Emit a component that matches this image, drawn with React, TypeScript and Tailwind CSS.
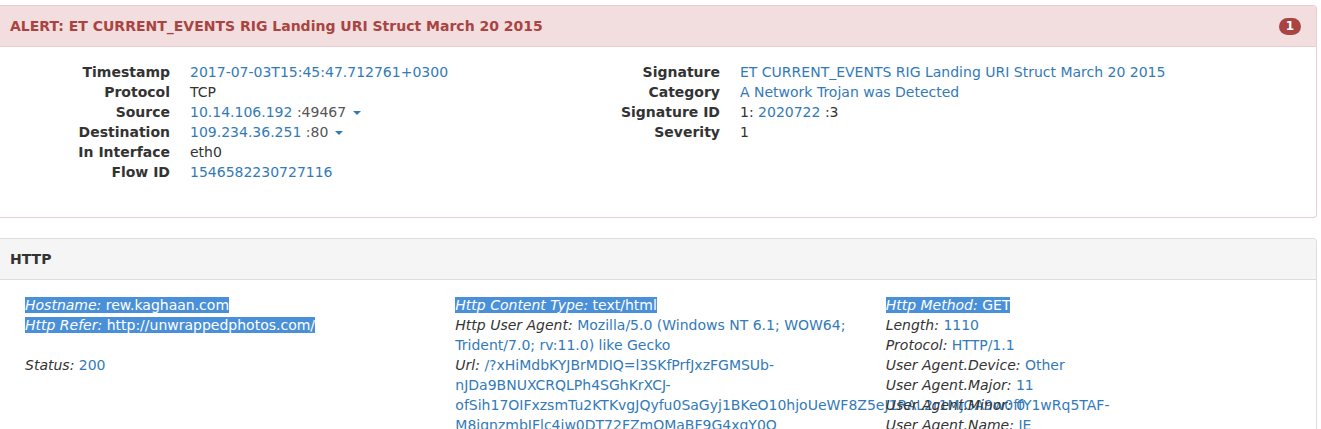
import React from 'react';

const Caret = () => (
  <span className="inline-block w-0 h-0 ml-[2px] align-middle border-t-[4px] border-x-[4px] border-t-[#337ab7] border-x-transparent" />
);

const alertRows: { label: string; value: React.ReactNode }[] = [
  { label: 'Timestamp', value: <span className="text-[#337ab7]">2017-07-03T15:45:47.712761+0300</span> },
  { label: 'Protocol', value: 'TCP' },
  {
    label: 'Source',
    value: (
      <>
        <span className="text-[#337ab7]">10.14.106.192</span> <span className="text-[#555]">:49467</span> <Caret />
      </>
    ),
  },
  {
    label: 'Destination',
    value: (
      <>
        <span className="text-[#337ab7]">109.234.36.251</span> <span className="text-[#555]">:80</span> <Caret />
      </>
    ),
  },
  { label: 'In Interface', value: 'eth0' },
  { label: 'Flow ID', value: <span className="text-[#337ab7]">1546582230727116</span> },
];

const sigRows: { label: string; value: React.ReactNode }[] = [
  { label: 'Signature', value: <span className="text-[#337ab7]">ET CURRENT_EVENTS RIG Landing URI Struct March 20 2015</span> },
  { label: 'Category', value: <span className="text-[#337ab7]">A Network Trojan was Detected</span> },
  {
    label: 'Signature ID',
    value: (
      <>
        1: <span className="text-[#337ab7]">2020722</span> :3
      </>
    ),
  },
  { label: 'Severity', value: '1' },
];

const DL = ({ rows }: { rows: { label: string; value: React.ReactNode }[] }) => (
  <div className="flex flex-col">
    {rows.map(r => (
      <div key={r.label} className="flex">
        <div className="w-[160px] shrink-0 text-right font-bold">{r.label}</div>
        <div className="ml-[20px] whitespace-nowrap">{r.value}</div>
      </div>
    ))}
  </div>
);

const Field = ({ label, value, selected, plain }: { label: string; value: string; selected?: boolean; plain?: boolean }) => {
  if (selected) {
    return (
      <div>
        <span className="bg-[#4a90d9] text-white">
          <em>{label}:</em> {value}
        </span>
      </div>
    );
  }
  return (
    <div>
      <em>{label}:</em> <span className={plain ? '' : 'text-[#337ab7]'}>{value}</span>
    </div>
  );
};

export default function App() {
  return (
    <div className="w-[1321px] h-[429px] overflow-hidden bg-white pt-[5px] pr-[4px] font-['DejaVu_Sans',sans-serif] text-[14px] leading-5 text-[#333]">
      {/* Alert panel */}
      <div className="border border-l-0 border-[#ebccd1] rounded-r-[4px] mb-5">
        <div className="flex items-center justify-between bg-[#f2dede] text-[#a94442] border-b border-[#ebccd1] pl-[10px] pr-[15px] py-[10px] rounded-tr-[3px]">
          <span className="font-bold">ALERT: ET CURRENT_EVENTS RIG Landing URI Struct March 20 2015</span>
          <span className="min-w-[22px] h-[17px] px-[7px] rounded-full bg-[#a94442] text-white text-[12px] font-bold leading-[17px] text-center">
            1
          </span>
        </div>
        <div className="grid grid-cols-[550px_1fr] pl-[10px] pt-[15px] pb-[35px]">
          <DL rows={alertRows} />
          <DL rows={sigRows} />
        </div>
      </div>

      {/* HTTP panel */}
      <div className="border border-l-0 border-[#ddd] rounded-r-[4px]">
        <div className="bg-[#f5f5f5] border-b border-[#ddd] pl-[10px] py-[10px] font-bold rounded-tr-[3px]">HTTP</div>
        <div className="grid grid-cols-3 pl-[10px] pr-[15px] pt-[15px] pb-[15px]">
          <div className="px-[15px] min-w-0">
            <Field label="Hostname" value="rew.kaghaan.com" selected />
            <Field label="Http Refer" value="http://unwrappedphotos.com/" selected />
            <div className="h-5" />
            <Field label="Status" value="200" />
          </div>
          <div className="px-[15px] min-w-0">
            <Field label="Http Content Type" value="text/html" selected />
            <Field label="Http User Agent" value="Mozilla/5.0 (Windows NT 6.1; WOW64; Trident/7.0; rv:11.0) like Gecko" />
            <Field
              label="Url"
              value="/?xHiMdbKYJBrMDIQ=l3SKfPrfJxzFGMSUb-nJDa9BNUXCRQLPh4SGhKrXCJ-ofSih17OIFxzsmTu2KTKvgJQyfu0SaGyj1BKeO10hjoUeWF8Z5eJ1RAL2r1MjGA9w0ffY1wRq5TAF-M8iqnzmbIFlc4jw0DT72FZmQMaBF9G4xgY0Q"
            />
          </div>
          <div className="px-[15px] min-w-0">
            <Field label="Http Method" value="GET" selected />
            <Field label="Length" value="1110" />
            <Field label="Protocol" value="HTTP/1.1" />
            <Field label="User Agent.Device" value="Other" />
            <Field label="User Agent.Major" value="11" />
            <Field label="User Agent.Minor" value="0" />
            <Field label="User Agent.Name" value="IE" />
          </div>
        </div>
      </div>
    </div>
  );
}
